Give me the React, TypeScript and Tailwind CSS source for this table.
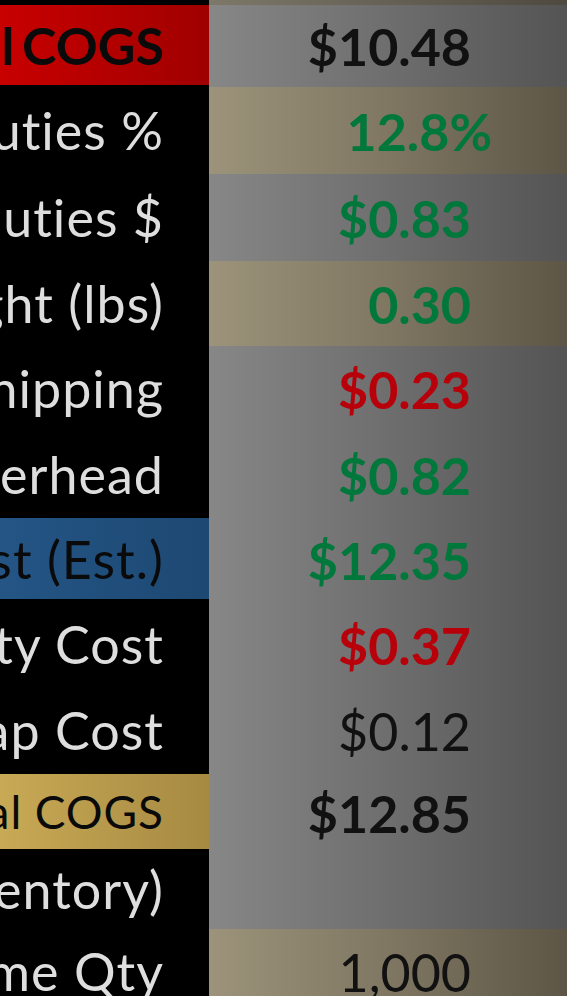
import React from 'react';

type Tone = 'black' | 'red' | 'blue' | 'gold';
type Fill = 'gray' | 'tan';
type Ink = 'dark' | 'green' | 'red';

type Row = {
  label: string;
  tone: Tone;
  value?: string;
  fill: Fill;
  ink?: Ink;
  bold?: boolean;
  pct?: boolean;
  h: string;
};

const rows: Row[] = [
  { label: 'Initial COGS', tone: 'red', value: '$10.48', fill: 'gray', ink: 'dark', bold: true, h: 'h-[82px]' },
  { label: 'Duties %', tone: 'black', value: '12.8%', fill: 'tan', ink: 'green', bold: true, pct: true, h: 'h-[87px]' },
  { label: 'Duties $', tone: 'black', value: '$0.83', fill: 'gray', ink: 'green', bold: true, h: 'h-[87px]' },
  { label: 'Weight (lbs)', tone: 'black', value: '0.30', fill: 'tan', ink: 'green', bold: true, h: 'h-[85px]' },
  { label: 'Shipping', tone: 'black', value: '$0.23', fill: 'gray', ink: 'red', bold: true, h: 'h-[85px]' },
  { label: 'Overhead', tone: 'black', value: '$0.82', fill: 'gray', ink: 'green', bold: true, h: 'h-[87px]' },
  { label: 'Total Cost (Est.)', tone: 'blue', value: '$12.35', fill: 'gray', ink: 'green', bold: true, h: 'h-[83px]' },
  { label: 'Quality Cost', tone: 'black', value: '$0.37', fill: 'gray', ink: 'red', bold: true, h: 'h-[87px]' },
  { label: 'Shrink Wrap Cost', tone: 'black', value: '$0.12', fill: 'gray', ink: 'dark', h: 'h-[86px]' },
  { label: 'Total COGS', tone: 'gold', value: '$12.85', fill: 'gray', ink: 'dark', bold: true, h: 'h-[77px]' },
  { label: 'Stock (Inventory)', tone: 'black', fill: 'gray', h: 'h-[78px]' },
  { label: 'Volume Qty', tone: 'black', value: '1,000', fill: 'tan', ink: 'dark', h: 'h-[85px]' },
];

const toneClass: Record<Tone, string> = {
  black: 'bg-black text-[#dedede]',
  red: 'bg-gradient-to-r from-[#c80000] to-[#a00000] text-[#0a0a0a] text-[52px] font-bold tracking-normal [word-spacing:-5px]',
  blue: 'bg-gradient-to-r from-[#245585] to-[#1d4872] text-[#0a0a0a]',
  gold: 'bg-gradient-to-r from-[#c8a955] to-[#a68a42] text-[#0a0a0a] text-[46px]',
};

const fillClass: Record<Fill, string> = {
  gray: 'bg-gradient-to-r from-[#878787] via-[#6e6e6e] to-[#545454]',
  tan: 'bg-gradient-to-r from-[#9c937a] via-[#7f7762] to-[#5d5646]',
};

const inkClass: Record<Ink, string> = {
  dark: 'text-[#111111]',
  green: 'text-[#00773b]',
  red: 'text-[#b8000a]',
};

export default function App() {
  return (
    <div className="w-[567px] h-[996px] overflow-hidden bg-black font-['Lato','Noto_Sans',sans-serif] text-[52px] leading-none">
      {/* top edge */}
      <div className="grid grid-cols-[209px_1fr] h-[5px]">
        <div className="bg-black" />
        <div className="bg-gradient-to-r from-[#7d7868] to-[#4e4a40]" />
      </div>

      {rows.map((row) => (
        <div key={row.label} className={`grid grid-cols-[209px_1fr] ${row.h}`}>
          <div
            className={`flex items-center justify-end overflow-hidden whitespace-nowrap pr-[45px] tracking-[0.02em] border-b-2 border-black ${toneClass[row.tone]}`}
          >
            <span className="shrink-0">{row.label}</span>
          </div>
          <div
            className={`flex items-center justify-end whitespace-nowrap text-[52px] ${fillClass[row.fill]} ${
              row.pct ? 'pr-[75px]' : 'pr-[96px]'
            }`}
          >
            {row.value && (
              <span className={`${row.ink ? inkClass[row.ink] : ''} ${row.bold ? 'font-bold' : 'font-normal'}`}>
                {row.value}
              </span>
            )}
          </div>
        </div>
      ))}
    </div>
  );
}
